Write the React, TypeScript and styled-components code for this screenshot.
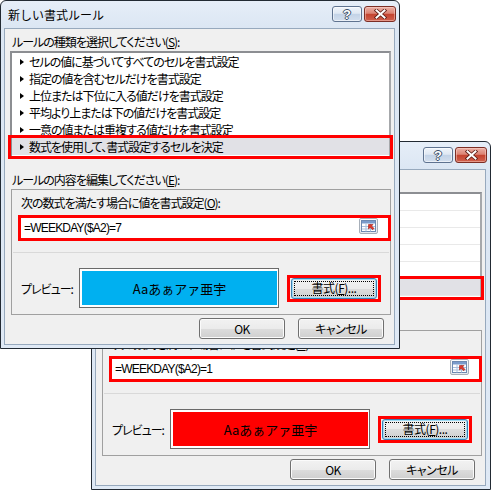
import React from "react";
import styled, { createGlobalStyle, css } from "styled-components";

const UI_FONT = `"Noto Sans CJK JP", "Noto Sans", sans-serif`;

const GlobalStyle = createGlobalStyle`
  html, body { margin: 0; padding: 0; background: #ffffff; }
  body { font-family: ${UI_FONT}; }
`;

const Desktop = styled.div`
  position: relative;
  width: 493px;
  height: 491px;
  overflow: hidden;
  background: #ffffff;
`;

const Window = styled.div<{ $x: number; $y: number; $z: number }>`
  position: absolute;
  left: ${(p) => p.$x}px;
  top: ${(p) => p.$y}px;
  z-index: ${(p) => p.$z};
  width: 400px;
  height: 349px;
  box-sizing: border-box;
  border: 1px solid #222a33;
  border-radius: 6px 6px 0 0;
  background: linear-gradient(#e6eef8 0px, #dbe6f3 28px, #dfe9f5 100%);
  display: flex;
  flex-direction: column;
`;

const TitleBar = styled.div`
  flex: none;
  height: 27px;
  display: flex;
  align-items: flex-start;
  justify-content: space-between;
  padding: 0 3px 0 7px;
`;

const Title = styled.div`
  font-family: ${UI_FONT};
  font-size: 12px;
  line-height: 27px;
  color: #000;
`;

const CaptionButtons = styled.div`
  display: flex;
  gap: 2px;
  margin-top: 5px;
`;

const CaptionButton = styled.div<{ $kind: "help" | "close" }>`
  height: 16px;
  box-sizing: border-box;
  border-radius: 3px;
  display: flex;
  align-items: center;
  justify-content: center;
  ${(p) =>
    p.$kind === "help"
      ? css`
          width: 30px;
          border: 1px solid #5f7390;
          background: linear-gradient(#f0f5fb 0%, #dfe8f3 45%, #c3d3e7 52%, #d3dfee 100%);
          box-shadow: inset 0 0 0 1px rgba(255, 255, 255, 0.55);
        `
      : css`
          width: 32px;
          border: 1px solid #7c2e25;
          background: linear-gradient(#eab0a6 0%, #dc8373 45%, #c4432f 52%, #d0614e 100%);
          box-shadow: inset 0 0 0 1px rgba(255, 220, 210, 0.45);
        `}
`;

const HelpGlyph = styled.span`
  font-family: "Liberation Sans", sans-serif;
  font-weight: bold;
  font-size: 13px;
  line-height: 1;
  color: #ffffff;
  text-shadow: -1px 0 #3d4f68, 1px 0 #3d4f68, 0 -1px #3d4f68, 0 1px #3d4f68;
`;

const Client = styled.div`
  flex: 1;
  margin: 0 4px 3px 3px;
  border: 1px solid #97a9bd;
  background: #f0f0f0;
  padding: 0 3px 0 5px;
  display: flex;
  flex-direction: column;
  font-family: ${UI_FONT};
  font-size: 12px;
  letter-spacing: -1px;
  color: #000;
  font-feature-settings: "palt" 1;
`;

const FieldLabel = styled.div<{ $top: number; $left?: number }>`
  margin-top: ${(p) => p.$top}px;
  margin-left: ${(p) => p.$left ?? 2}px;
  height: 14px;
  line-height: 14px;
  white-space: nowrap;
`;

const ListBox = styled.div`
  position: relative;
  margin-top: 2px;
  height: 107px;
  box-sizing: border-box;
  border: 2px solid #8c8e92;
  border-right-color: #a6a8ab;
  border-bottom-color: #a6a8ab;
  background: #ffffff;
`;

const RuleRow = styled.div<{ $selected: boolean; $ruled: boolean }>`
  height: 17px;
  display: flex;
  align-items: center;
  gap: 5px;
  padding-left: 8px;
  white-space: nowrap;
  line-height: 17px;
  background: ${(p) => (p.$selected ? "#e1e1e6" : "transparent")};
  ${(p) =>
    p.$ruled &&
    css`
      box-shadow: inset 0 -1px 0 #e9e9e9;
    `}
`;

const Bullet = styled.span`
  width: 0;
  height: 0;
  border-left: 4px solid #000;
  border-top: 3.5px solid transparent;
  border-bottom: 3.5px solid transparent;
`;

const RowHighlight = styled.div`
  position: absolute;
  left: -4px;
  right: -4px;
  top: 82px;
  bottom: -3px;
  border: 3px solid #ff0000;
  pointer-events: none;
`;

const GroupBox = styled.div`
  margin: 2px 0 0 1px;
  height: 126px;
  box-sizing: border-box;
  border: 1px solid #a0a0a0;
  padding-top: 6px;
  display: flex;
  flex-direction: column;
`;

const FormulaMark = styled.div`
  margin: 5px -1px 0 6px;
  height: 26px;
  box-sizing: border-box;
  border: 3px solid #ff0000;
  background: #ffffff;
  display: flex;
  align-items: flex-start;
`;

const FormulaText = styled.div`
  flex: 1;
  padding-left: 3px;
  height: 20px;
  line-height: 20px;
  font-family: "Liberation Sans", ${UI_FONT};
  font-size: 12px;
  letter-spacing: -0.8px;
  color: #000;
`;

const RefButton = styled.div`
  margin-right: 10px;
  width: 19px;
  height: 16px;
  box-sizing: border-box;
  border: 1px solid #a7afb9;
  border-radius: 2px;
  background: linear-gradient(#fdfdfd, #e4e8ee);
  display: flex;
  align-items: center;
  justify-content: center;
`;

const Separator = styled.div`
  margin: 11px 1px 0;
  height: 1px;
  background: #d9d9d9;
`;

const PreviewRow = styled.div`
  margin-top: 15px;
  height: 40px;
  display: flex;
  align-items: center;
  padding-left: 9px;
`;

const PreviewLabel = styled.div`
  width: 58px;
  white-space: nowrap;
`;

const PreviewFrame = styled.div`
  width: 200px;
  height: 40px;
  box-sizing: border-box;
  border: 1px solid #6a6a6a;
  background: #ffffff;
  padding: 2px 1px 2px 2px;
  margin-right: 8px;
`;

const PreviewFill = styled.div<{ $fill: string }>`
  height: 100%;
  background: ${(p) => p.$fill};
  display: flex;
  align-items: center;
  justify-content: center;
  font-size: 13px;
  letter-spacing: 0;
  font-feature-settings: normal;
  color: #000;
  white-space: nowrap;
`;

const ButtonMark = styled.div`
  border: 3px solid #ff0000;
  padding: 0 1px;
  display: flex;
`;

const DialogButton = styled.div<{ $focused?: boolean }>`
  position: relative;
  width: 86px;
  height: 21px;
  box-sizing: border-box;
  border: 1px solid ${(p) => (p.$focused ? "#3c7fb1" : "#707070")};
  border-radius: 3px;
  background: linear-gradient(#f2f2f2 0%, #ebebeb 50%, #dddddd 50%, #cfcfcf 100%);
  box-shadow: inset 0 0 0 1px ${(p) => (p.$focused ? "#9fdcf5" : "#fbfbfb")};
  display: flex;
  align-items: center;
  justify-content: center;
  font-size: 12px;
  letter-spacing: -0.5px;
  line-height: 1;
  color: #000;
  white-space: nowrap;
  ${(p) =>
    p.$focused &&
    css`
      &::after {
        content: "";
        position: absolute;
        inset: 2px;
        border: 1px dotted #000;
      }
    `}
`;

const ButtonRow = styled.div`
  margin-top: 3px;
  display: flex;
  justify-content: flex-end;
  gap: 13px;
  padding-right: 7px;
`;

const rules = [
  "セルの値に基づいてすべてのセルを書式設定",
  "指定の値を含むセルだけを書式設定",
  "上位または下位に入る値だけを書式設定",
  "平均より上または下の値だけを書式設定",
  "一意の値または重複する値だけを書式設定",
  "数式を使用して、書式設定するセルを決定",
];

const CloseIcon = () => (
  <svg width="13" height="10" viewBox="0 0 13 10">
    <path d="M2.5 1.5 L10.5 8.5 M10.5 1.5 L2.5 8.5" stroke="#5a1b14" strokeWidth="3.6" strokeLinecap="square" />
    <path d="M2.5 1.5 L10.5 8.5 M10.5 1.5 L2.5 8.5" stroke="#ffffff" strokeWidth="2" strokeLinecap="square" />
  </svg>
);

const RefIcon = () => (
  <svg width="15" height="12" viewBox="0 0 15 12">
    <rect x="0.5" y="0.5" width="14" height="11" fill="#ffffff" stroke="#6d89b0" />
    <rect x="1" y="1" width="13" height="2.5" fill="#7a9bcb" />
    <path d="M1 6.5H14M1 9H14M5 3.5V11.5M9.5 3.5V11.5" stroke="#a9bfdc" strokeWidth="1" />
    <path d="M7.5 4.5 L12 4.5 L10.6 6 L13 8.4 L11.6 9.8 L9.2 7.4 L7.5 9 Z" fill="#e0382c" stroke="#9e1f16" strokeWidth="0.6" />
  </svg>
);

type RuleDialogProps = {
  x: number;
  y: number;
  z: number;
  formula: string;
  preview: string;
  ruled?: boolean;
};

const RuleDialog = ({ x, y, z, formula, preview, ruled = false }: RuleDialogProps) => (
  <Window $x={x} $y={y} $z={z}>
    <TitleBar>
      <Title>新しい書式ルール</Title>
      <CaptionButtons>
        <CaptionButton $kind="help">
          <HelpGlyph>?</HelpGlyph>
        </CaptionButton>
        <CaptionButton $kind="close">
          <CloseIcon />
        </CaptionButton>
      </CaptionButtons>
    </TitleBar>
    <Client>
      <FieldLabel $top={6}>
        ルールの種類を選択してください(<u>S</u>):
      </FieldLabel>
      <ListBox>
        {rules.map((r, i) => (
          <RuleRow key={r} $selected={i === rules.length - 1} $ruled={ruled}>
            <Bullet />
            {r}
          </RuleRow>
        ))}
        <RowHighlight />
      </ListBox>
      <FieldLabel $top={15}>
        ルールの内容を編集してください(<u>E</u>):
      </FieldLabel>
      <GroupBox>
        <FieldLabel $top={0} $left={9}>
          次の数式を満たす場合に値を書式設定(<u>O</u>):
        </FieldLabel>
        <FormulaMark>
          <FormulaText>{formula}</FormulaText>
          <RefButton>
            <RefIcon />
          </RefButton>
        </FormulaMark>
        <Separator />
        <PreviewRow>
          <PreviewLabel>プレビュー:</PreviewLabel>
          <PreviewFrame>
            <PreviewFill $fill={preview}>Aaあぁアァ亜宇</PreviewFill>
          </PreviewFrame>
          <ButtonMark>
            <DialogButton $focused>
              書式(<u>F</u>)...
            </DialogButton>
          </ButtonMark>
        </PreviewRow>
      </GroupBox>
      <ButtonRow>
        <DialogButton>OK</DialogButton>
        <DialogButton>キャンセル</DialogButton>
      </ButtonRow>
    </Client>
  </Window>
);

export default function App() {
  return (
    <>
      <GlobalStyle />
      <Desktop>
        <RuleDialog x={91} y={141} z={1} formula="=WEEKDAY($A2)=1" preview="#ff0000" ruled />
        <RuleDialog x={0} y={0} z={2} formula="=WEEKDAY($A2)=7" preview="#00b0f0" />
      </Desktop>
    </>
  );
}
